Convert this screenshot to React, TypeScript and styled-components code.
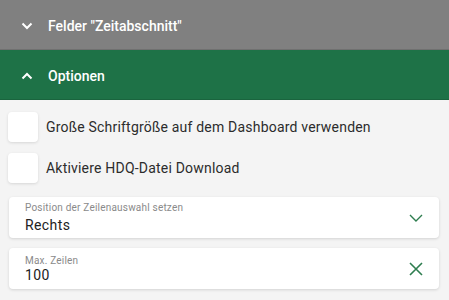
import styled, { createGlobalStyle } from 'styled-components';

const GlobalStyle = createGlobalStyle`
  html, body {
    margin: 0;
    padding: 0;
    background: #f4f4f4;
    font-family: Roboto, "Noto Sans", sans-serif;
  }
`;

const Page = styled.div`
  width: 449px;
  height: 300px;
  overflow: hidden;
  background: #f4f4f4;
`;

const SectionHeader = styled.div<{ $bg: string }>`
  height: 50px;
  display: flex;
  align-items: center;
  padding: 2px 0 0 21px;
  gap: 15px;
  background: ${p => p.$bg};
  color: #fff;
  font-size: 14px;
  font-weight: 500;
  box-sizing: border-box;
  border-bottom: 1px solid rgba(0, 0, 0, 0.12);
`;

const Body = styled.div`
  display: flex;
  flex-direction: column;
  padding: 11px 10px 0 8px;
`;

const CheckRow = styled.label`
  display: flex;
  align-items: center;
  gap: 8px;
  height: 30px;
  margin-bottom: 10px;
  padding-top: 1px;
  font-size: 14px;
  letter-spacing: 0.2px;
  color: #2c2c2c;
`;

const Box = styled.span`
  width: 30px;
  height: 30px;
  border-radius: 4px;
  background: #fff;
  box-shadow: 0 1px 3px rgba(0, 0, 0, 0.12);
  flex-shrink: 0;
  margin-top: -1px;
`;

const Field = styled.div`
  display: flex;
  align-items: center;
  height: 41px;
  margin: 4px 0 6px 1px;
  padding: 0 16px;
  background: #fff;
  border-radius: 4px;
  box-shadow: 0 1px 3px rgba(0, 0, 0, 0.14);
  box-sizing: border-box;
`;

const FieldText = styled.div<{ $gap: number }>`
  flex: 1;
  display: flex;
  flex-direction: column;
  gap: ${p => p.$gap}px;
`;

const FieldLabel = styled.span`
  font-size: 10px;
  color: #8a8a8a;
  line-height: 13px;
  letter-spacing: 0.2px;
`;

const FieldValue = styled.span`
  font-size: 14px;
  color: #222;
  line-height: 17px;
  letter-spacing: 0.4px;
`;

const Chevron = ({ up }: { up?: boolean }) => (
  <svg width="12" height="8" viewBox="0 0 12 8">
    <path
      d={up ? 'M1.5 6.5L6 2l4.5 4.5' : 'M1.5 1.5L6 6l4.5-4.5'}
      fill="none"
      stroke="#fff"
      strokeWidth="2"
    />
  </svg>
);

const App = () => (
  <Page>
    <GlobalStyle />
    <SectionHeader $bg="#808080">
      <Chevron />
      Felder "Zeitabschnitt"
    </SectionHeader>
    <SectionHeader $bg="#1e7247">
      <Chevron up />
      Optionen
    </SectionHeader>
    <Body>
      <CheckRow>
        <Box />
        Große Schriftgröße auf dem Dashboard verwenden
      </CheckRow>
      <CheckRow>
        <Box />
        Aktiviere HDQ-Datei Download
      </CheckRow>
      <Field>
        <FieldText $gap={3}>
          <FieldLabel>Position der Zeilenauswahl setzen</FieldLabel>
          <FieldValue>Rechts</FieldValue>
        </FieldText>
        <svg width="14" height="8" viewBox="0 0 14 8">
          <path d="M1 1l6 6 6-6" fill="none" stroke="#2e7d4f" strokeWidth="1.4" />
        </svg>
      </Field>
      <Field>
        <FieldText $gap={0}>
          <FieldLabel>Max. Zeilen</FieldLabel>
          <FieldValue>100</FieldValue>
        </FieldText>
        <svg width="14" height="14" viewBox="0 0 14 14">
          <path d="M1 1l12 12M13 1L1 13" fill="none" stroke="#2e7d4f" strokeWidth="1.6" />
        </svg>
      </Field>
    </Body>
  </Page>
);

export default App;
